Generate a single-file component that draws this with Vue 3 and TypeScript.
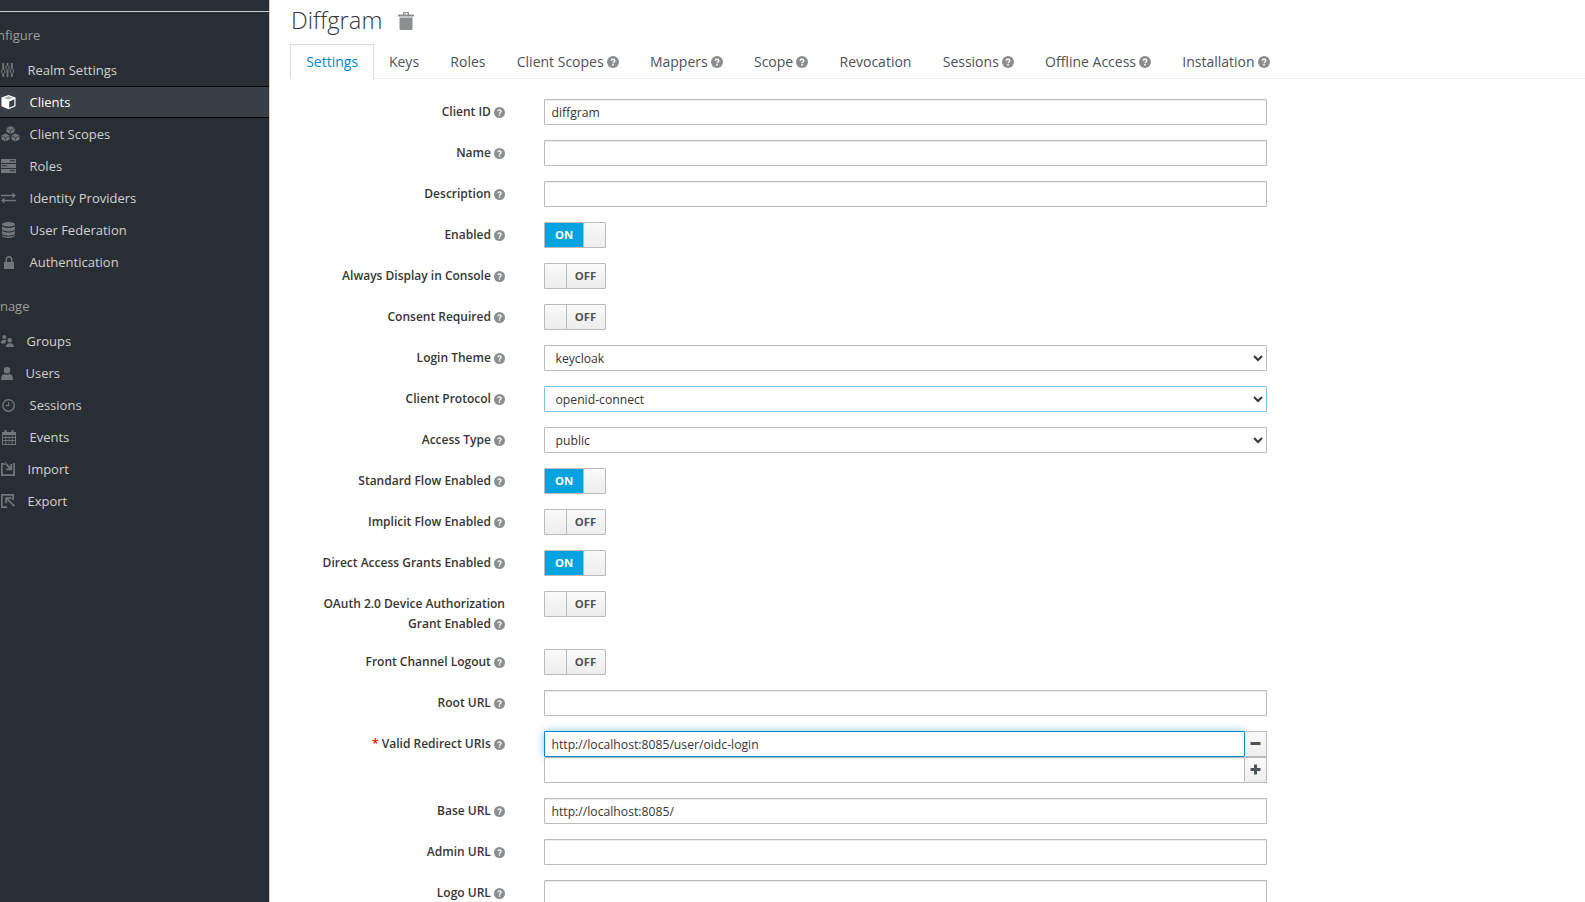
<script setup lang="ts">
interface Shape { d: string; fill?: string }
interface NavItem { label: string; textX: number; iconX: number; w: number; h: number; vb: string; shapes: Shape[]; active?: boolean }

const cube = (x: number, y: number, s: number): Shape[] => [
  { d: `M${x} ${y - s}L${x + s} ${y - s / 2}V${y + s / 2}L${x} ${y + s}L${x - s} ${y + s / 2}V${y - s / 2}Z` },
  { d: `M${x} ${y - 0.1}L${x + s - 0.7} ${y - s / 2 + 0.3}V${y - s / 2 + 0.9}L${x + 0.3} ${y + 0.5}V${y + s - 0.6}H${x - 0.3}V${y + 0.5}L${x - s + 0.7} ${y - s / 2 + 0.9}V${y - s / 2 + 0.3}Z`, fill: '#292e34' },
]

const configure: NavItem[] = [
  { label: 'Realm Settings', textX: 27.5, iconX: 1, w: 13, h: 14, vb: '0 0 15 16', shapes: [{ d: 'M1.500 0h2.100v16H1.500zM6.500 0h2.100v16H6.500zM11.500 0h2.100v16h-2.100zM.2 8h4.700v3.600H.2zM5.200 3.500h4.700v3.600H5.200zM10.200 7.500h4.700v3.600h-4.700z' }] },
  { label: 'Clients', textX: 29.5, iconX: 1, w: 15, h: 16, vb: '0 0 16 16', active: true, shapes: [{ d: 'M8 .5 15.500 3.200v9.400L8 15.700.5 12.600V3.200z', fill: '#fff' }, { d: 'M8.800 7.400 14.200 5v6.800l-5.400 2.400z', fill: '#3a3f44' }, { d: 'M8 1.900 3.400 3.600 8 5.400l4.600-1.800z', fill: '#a8a9ab' }] },
  { label: 'Client Scopes', textX: 29.5, iconX: 1, w: 19, h: 16, vb: '0 0 19 16', shapes: [...cube(9.5, 4, 4), ...cube(4.5, 11.5, 4), ...cube(14.5, 11.5, 4)] },
  { label: 'Roles', textX: 29.5, iconX: 1, w: 15, h: 14, vb: '0 0 15 14', shapes: [{ d: 'M0 0h15v4H0zM0 5h15v4H0zM0 10h15v4H0z' }, { d: 'M9 1.200h5v1H9zM1 6.200h5v1H1zM9 11.200h5v1H9z', fill: '#292e34' }] },
  { label: 'Identity Providers', textX: 29.5, iconX: 1, w: 15, h: 12, vb: '0 0 15 12', shapes: [{ d: 'M0 2.700h11.500V.5L15 3.500l-3.500 3V4.300H0zM15 7.700H3.500V5.500L0 8.500l3.500 3V9.300H15z' }] },
  { label: 'User Federation', textX: 29.5, iconX: 2, w: 13, h: 16, vb: '0 0 13 16', shapes: [{ d: 'M6.500 0C10 0 13 1 13 2.300S10 4.700 6.500 4.700 0 3.600 0 2.300 3 0 6.500 0zM0 4.200c1.200 1.200 3.800 1.800 6.500 1.800S11.800 5.400 13 4.200V7c0 1.300-3 2.400-6.500 2.400S0 8.300 0 7zM0 8.800c1.200 1.200 3.800 1.800 6.500 1.800s5.300-.6 6.500-1.800v2.500c0 1.300-3 2.400-6.500 2.400S0 12.600 0 11.300zM0 12.900c1.200 1 3.800 1.500 6.500 1.500s5.300-.5 6.500-1.500v.6c0 1.300-3 2.500-6.500 2.500S0 14.800 0 13.500z' }] },
  { label: 'Authentication', textX: 29.5, iconX: 4, w: 10, h: 13, vb: '0 0 10 13', shapes: [{ d: 'M0 6h1.500V3.800C1.500 1.700 3 0 5 0s3.500 1.700 3.500 3.800V6H10v7H0zM3 6h4V3.800C7 2.600 6.100 1.600 5 1.600S3 2.600 3 3.800z' }] },
]

const manage: NavItem[] = [
  { label: 'Groups', textX: 26.5, iconX: 1, w: 13, h: 12, vb: '0 0 13 12', shapes: [{ d: 'M3.300 0a2 2 0 1 1 0 4 2 2 0 0 1 0-4zM0 8.500C0 6 1 4.800 3.300 4.800c.8 0 1.400.1 1.900.4-.6.8-.9 2-.9 3.300zM8.700 3a2.300 2.300 0 1 1 0 4.600 2.300 2.300 0 0 1 0-4.600zM5 12c0-2.600 1-3.800 3.700-3.800S13 9.400 13 12z' }] },
  { label: 'Users', textX: 25.5, iconX: 1, w: 12, h: 13, vb: '0 0 12 13', shapes: [{ d: 'M6 0a3.200 3.200 0 1 1 0 6.400A3.200 3.200 0 0 1 6 0zM0 13c0-3.800 1.500-5.700 3.500-5.900.7.400 1.600.7 2.500.7s1.800-.3 2.500-.7c2 .2 3.500 2.100 3.500 5.900z' }] },
  { label: 'Sessions', textX: 29.5, iconX: 2, w: 13, h: 13, vb: '0 0 13 13', shapes: [{ d: 'M6.500 0a6.500 6.500 0 1 1 0 13 6.500 6.500 0 0 1 0-13zm0 1.500a5 5 0 1 0 0 10 5 5 0 0 0 0-10zM6 3h1.200v4.200H3.800V6H6z' }] },
  { label: 'Events', textX: 29.5, iconX: 2, w: 14, h: 15, vb: '0 0 14 15', shapes: [{ d: 'M0 2h2.500V0h2v2h5V0h2v2H14v13H0zM1 5v2h2.400V5zm3.300 0v2h2.400V5zm3 0v2h2.400V5zm3.300 0v2H13V5zM1 8v2h2.400V8zm3.300 0v2h2.400V8zm3 0v2h2.400V8zm3.300 0v2H13V8zM1 11v3h2.400v-3zm3.300 0v3h2.400v-3zm3 0v3h2.400v-3zm3.300 0v3H13v-3z' }] },
  { label: 'Import', textX: 27.5, iconX: 1, w: 14, h: 14, vb: '0 0 14 14', shapes: [{ d: 'M0 1h4.500v1.700H1.700v9.600h10.600V1H14v13H0zM4.500 0l4.900 4.900V2h1.800v6.200H5V6.400h3.100L3.300 1.200z' }] },
  { label: 'Export', textX: 27.5, iconX: 1, w: 14, h: 14, vb: '0 0 14 14', shapes: [{ d: 'M0 0h13v6h-1.700V1.700H1.700v10.600H6V14H0zM4.200 3.200h6.400v1.700H7.300L14 11.600 12.800 12.800 6 6v3.300H4.200z' }] },
]

const tabs = [
  { label: 'Settings', help: false, active: true },
  { label: 'Keys', help: false },
  { label: 'Roles', help: false },
  { label: 'Client Scopes', help: true },
  { label: 'Mappers', help: true },
  { label: 'Scope', help: true },
  { label: 'Revocation', help: false },
  { label: 'Sessions', help: true },
  { label: 'Offline Access', help: true },
  { label: 'Installation', help: true },
]

type Row =
  | { kind: 'input'; label: string; value?: string }
  | { kind: 'toggle'; label: string; on: boolean }
  | { kind: 'select'; label: string; value: string; focus?: boolean }
  | { kind: 'multi'; label: string; value: string }

const rows: Row[] = [
  { kind: 'input', label: 'Client ID', value: 'diffgram' },
  { kind: 'input', label: 'Name' },
  { kind: 'input', label: 'Description' },
  { kind: 'toggle', label: 'Enabled', on: true },
  { kind: 'toggle', label: 'Always Display in Console', on: false },
  { kind: 'toggle', label: 'Consent Required', on: false },
  { kind: 'select', label: 'Login Theme', value: 'keycloak' },
  { kind: 'select', label: 'Client Protocol', value: 'openid-connect', focus: true },
  { kind: 'select', label: 'Access Type', value: 'public' },
  { kind: 'toggle', label: 'Standard Flow Enabled', on: true },
  { kind: 'toggle', label: 'Implicit Flow Enabled', on: false },
  { kind: 'toggle', label: 'Direct Access Grants Enabled', on: true },
  { kind: 'toggle', label: 'OAuth 2.0 Device Authorization Grant Enabled', on: false },
  { kind: 'toggle', label: 'Front Channel Logout', on: false },
  { kind: 'input', label: 'Root URL' },
  { kind: 'multi', label: 'Valid Redirect URIs', value: 'http://localhost:8085/user/oidc-login' },
  { kind: 'input', label: 'Base URL', value: 'http://localhost:8085/' },
  { kind: 'input', label: 'Admin URL' },
  { kind: 'input', label: 'Logo URL' },
]
</script>

<template>
  <div class="page">
    <aside class="sidebar">
      <div class="rule"></div>
      <h2 class="section section-first">Configure</h2>
      <ul class="nav">
        <li v-for="item in configure" :key="item.label" class="nav-item" :class="{ active: item.active }">
          <span class="nav-icon" :style="{ width: item.textX + 'px', paddingLeft: item.iconX + 'px' }">
            <svg :width="item.w" :height="item.h" :viewBox="item.vb"><path v-for="(s, i) in item.shapes" :key="i" :d="s.d" :fill="s.fill || 'currentColor'" fill-rule="evenodd" /></svg>
          </span>
          <span>{{ item.label }}</span>
        </li>
      </ul>
      <h2 class="section section-second">Manage</h2>
      <ul class="nav">
        <li v-for="item in manage" :key="item.label" class="nav-item">
          <span class="nav-icon" :style="{ width: item.textX + 'px', paddingLeft: item.iconX + 'px' }">
            <svg :width="item.w" :height="item.h" :viewBox="item.vb"><path v-for="(s, i) in item.shapes" :key="i" :d="s.d" :fill="s.fill || 'currentColor'" fill-rule="evenodd" /></svg>
          </span>
          <span>{{ item.label }}</span>
        </li>
      </ul>
    </aside>

    <main class="main">
      <header class="title-row">
        <h1 class="title">Diffgram</h1>
        <svg class="trash" width="16" height="18" viewBox="0 0 16 18">
          <path fill="currentColor" fill-rule="evenodd" d="M5 2.500V1.200C5 .5 5.500 0 6.200 0h3.600C10.500 0 11 .5 11 1.200v1.300h4.500c.3 0 .5.200.5.500v1.500H0V3c0-.3.200-.5.500-.5zM6.300 2.500h3.400V1.300H6.300zM1.500 5.500h13v11c0 .9-.6 1.500-1.400 1.500H2.900c-.8 0-1.400-.6-1.400-1.500z" />
        </svg>
      </header>

      <nav class="tabs">
        <a v-for="tab in tabs" :key="tab.label" class="tab" :class="{ 'tab-active': tab.active }">
          {{ tab.label }}
          <svg v-if="tab.help" class="help tab-help" viewBox="0 0 12 12"><circle cx="6" cy="6" r="6" fill="currentColor" /><path d="M4.200 4.700C4.300 3.700 5 3.200 6 3.200s1.800.6 1.800 1.500c0 1.300-1.800 1.300-1.800 2.600" fill="none" stroke="#fff" stroke-width="1.400" /><rect x="5.200" y="8" width="1.600" height="1.500" fill="#fff" /></svg>
        </a>
      </nav>

      <form class="form">
        <div v-for="row in rows" :key="row.label" class="row">
          <label class="label">
            <span v-if="row.kind === 'multi'" class="required">* </span>{{ row.label }}
            <svg class="help" viewBox="0 0 12 12"><circle cx="6" cy="6" r="6" fill="currentColor" /><path d="M4.200 4.700C4.300 3.700 5 3.200 6 3.200s1.800.6 1.800 1.500c0 1.300-1.800 1.300-1.800 2.600" fill="none" stroke="#fff" stroke-width="1.400" /><rect x="5.200" y="8" width="1.600" height="1.500" fill="#fff" /></svg>
          </label>
          <div class="control">
            <input v-if="row.kind === 'input'" class="field" type="text" :value="row.value || ''" />

            <div v-else-if="row.kind === 'toggle'" class="switch" :class="row.on ? 'switch-on' : 'switch-off'">
              <template v-if="row.on">
                <span class="switch-state">ON</span><span class="switch-handle"></span>
              </template>
              <template v-else>
                <span class="switch-handle"></span><span class="switch-state">OFF</span>
              </template>
            </div>

            <select v-else-if="row.kind === 'select'" class="field select" :class="{ 'select-focus': row.focus }">
              <option>{{ row.value }}</option>
            </select>

            <div v-else class="multi">
              <div class="multi-line">
                <input class="field field-focus" type="text" :value="row.value" />
                <button type="button" class="add-btn">
                  <svg width="11" height="11" viewBox="0 0 11 11"><rect x="0.500" y="4" width="10" height="3" fill="currentColor" /></svg>
                </button>
              </div>
              <div class="multi-line">
                <input class="field" type="text" value="" />
                <button type="button" class="add-btn">
                  <svg width="11" height="11" viewBox="0 0 11 11"><path d="M4 .5h3V4h3.500v3H7v3.500H4V7H.5V4H4z" fill="currentColor" /></svg>
                </button>
              </div>
            </div>
          </div>
        </div>
      </form>
    </main>
  </div>
</template>

<style>
html, body { margin: 0; height: 100%; overflow: hidden; background: #fff; }
</style>

<style scoped>
.page {
  display: flex;
  height: 902px;
  overflow: hidden;
  font-family: "Open Sans", "Noto Sans", sans-serif;
  font-size: 13px;
  color: #363636;
}
.sidebar {
  width: 270px;
  flex: none;
  background: #292e34;
  border-right: 1px solid #d1d1d1;
  box-sizing: border-box;
  padding-top: 11px;
  overflow: hidden;
}
.rule { height: 1px; background: #d1d1d1; }
.section {
  margin: 0 0 0 -19px;
  font-size: 13px;
  font-weight: 400;
  line-height: 20px;
  color: #9c9ea1;
}
.section-first { padding: 13px 0 9px; }
.section-second { padding: 18px 0 9px; margin-left: -19px; }
.nav { list-style: none; margin: 0; padding: 0; }
.nav-item {
  display: flex;
  align-items: center;
  height: 32px;
  box-sizing: border-box;
  color: #d1d1d1;
}
.nav-item.active {
  background: #393f44;
  border-top: 1px solid #030303;
  border-bottom: 1px solid #030303;
  color: #fff;
}
.nav-icon {
  display: flex;
  align-items: center;
  flex: none;
  box-sizing: border-box;
  color: #72767b;
}
.main { flex: 1; min-width: 0; padding-left: 20px; }
.title-row { display: flex; align-items: center; height: 44px; gap: 16px; padding: 0 0 3px 1px; box-sizing: border-box; }
.title {
  margin: -1px 0 0;
  font-size: 23.7px;
  font-weight: 300;
  color: #363636;
}
.trash { color: #8b8d8f; margin-top: 1px; }
.tabs {
  display: flex;
  height: 35px;
  box-sizing: border-box;
  border-bottom: 1px solid #ededed;
}
.tab {
  display: flex;
  align-items: center;
  gap: 3px;
  height: 34px;
  padding: 0 14.65px;
  box-sizing: border-box;
  font-size: 14px;
  color: #4d5258;
  border: 1px solid transparent;
  border-bottom: 0;
}
.tab-active {
  color: #0088ce;
  background: #fff;
  height: 35px;
  padding: 0 15.2px 1px;
  border-color: #ddd;
}
.tab-active + .tab { margin-left: -1px; }
.form { padding-top: 20px; }
.row { display: flex; gap: 39px; margin-bottom: 15px; }
.label {
  width: 215px;
  flex: none;
  box-sizing: border-box;
  padding: 3px 0 0;
  text-align: right;
  font-size: 12px;
  font-weight: 560;
  line-height: 20px;
  color: #363636;
}
.help {
  display: inline-block;
  width: 11px;
  height: 11px;
  margin-left: 0;
  vertical-align: -1.5px;
  color: #8b8d8f;
}
.tab-help { width: 12px; height: 12px; margin: 0; }
.required { color: #f00; }
.control { width: 723px; flex: none; }
.field {
  display: block;
  width: 100%;
  height: 26px;
  box-sizing: border-box;
  padding: 2px 6.5px;
  border: 1px solid #bbb;
  border-radius: 1px;
  background: #fff;
  box-shadow: inset 0 1px 1px rgba(3, 3, 3, 0.075);
  font-family: inherit;
  font-size: 12.2px;
  color: #363636;
  outline: none;
}
.select { box-shadow: none; background: #fff; color: #363636; }
.select-focus { border-color: #7dc3e8; }
.field-focus {
  border-color: #0088ce;
  box-shadow: 0 0 8px rgba(0, 136, 206, 0.45);
}
.switch {
  display: flex;
  width: 62px;
  height: 26px;
  box-sizing: border-box;
  border: 1px solid #bbb;
  border-radius: 1px;
  overflow: hidden;
}
.switch-state {
  display: flex;
  align-items: center;
  justify-content: center;
  font-size: 11.3px;
  font-weight: 700;
  flex: 1;
  padding: 0 1px 2px 0;
  background: linear-gradient(#fafafa, #ededed);
  color: #4d5258;
}
.switch-on .switch-state { background: #00a2e0; color: #fff; padding-right: 0; }
.switch-handle {
  width: 22px;
  flex: none;
  box-sizing: border-box;
  background: linear-gradient(#fafafa, #ededed);
}
.switch-off .switch-handle { border-right: 1px solid #bbb; }
.switch-on .switch-handle { border-left: 1px solid #bbb; }
.multi-line { display: flex; }
.multi-line .field { flex: 1; width: auto; min-width: 0; }
.add-btn {
  display: flex;
  align-items: center;
  justify-content: center;
  width: 22px;
  height: 26px;
  flex: none;
  padding: 0 0 2px;
  box-sizing: border-box;
  border: 1px solid #bbb;
  border-left-width: 0;
  background: linear-gradient(#fafafa, #ededed);
  color: #4d5258;
}
</style>
